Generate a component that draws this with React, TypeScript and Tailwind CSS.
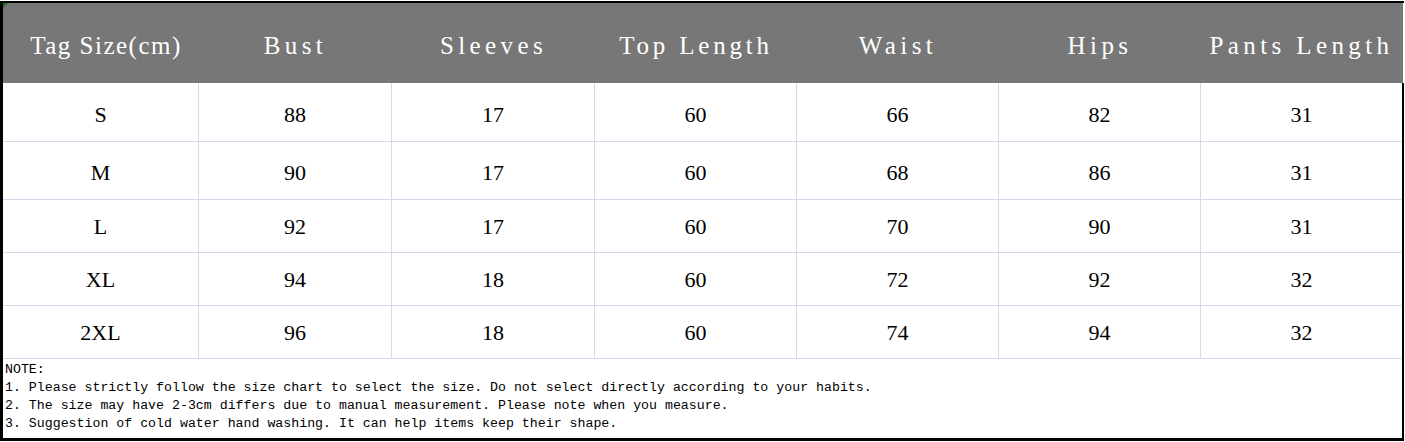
import React from "react";

const headers = ["Tag Size(cm)", "Bust", "Sleeves", "Top Length", "Waist", "Hips", "Pants Length"];
const tracks = [
  "tracking-[1.5px] pl-[10px]",
  "tracking-[4.4px]",
  "tracking-[4.4px]",
  "tracking-[3.8px]",
  "tracking-[4.4px]",
  "tracking-[4.4px]",
  "tracking-[4.4px]",
];
const rows: { cells: string[]; h: string; pad: string }[] = [
  { cells: ["S", "88", "17", "60", "66", "82", "31"], h: "h-[58px]", pad: "pt-[4px]" },
  { cells: ["M", "90", "17", "60", "68", "86", "31"], h: "h-[58px]", pad: "pt-[3px]" },
  { cells: ["L", "92", "17", "60", "70", "90", "31"], h: "h-[53px]", pad: "" },
  { cells: ["XL", "94", "18", "60", "72", "92", "32"], h: "h-[53px]", pad: "" },
  { cells: ["2XL", "96", "18", "60", "74", "94", "32"], h: "h-[53px]", pad: "" },
];

const cols = "grid grid-cols-[196px_193px_203px_202px_202px_202px_201px]";

export default function App() {
  return (
    <div className="w-[1405px] h-[442px] bg-white pt-px">
      <div className="w-[1404px] border-l-[3px] border-t-2 border-b-[3px] border-black">
        {/* header */}
        <div className={`${cols} relative h-[80px] w-[1400px] bg-[#777777]`}>
          <svg className="absolute left-0 top-0" width="5" height="5" viewBox="0 0 5 5">
            <polygon points="0,0 5,0 0,5" fill="#1f7a1f" />
          </svg>
          {headers.map((h, i) => (
            <div
              key={h}
              className={`flex items-center justify-center pt-[5px] text-[25px] text-white font-['Liberation_Serif',serif] ${tracks[i]}`}
            >
              {h}
            </div>
          ))}
        </div>
        {/* body */}
        <div className="w-[1401px] border-r-2 border-black">
          {rows.map((r, ri) => (
            <div key={ri} className={`${cols} ${r.h} border-t border-[#d5d9ec] first:border-t-0`}>
              {r.cells.map((c, ci) => (
                <div
                  key={ci}
                  className={`flex items-center justify-center text-[22px] text-black font-['Liberation_Serif',serif] ${
                    ci < 6 ? "border-r border-[#d5d9ec]" : ""
                  } ${r.pad}`}
                >
                  {c}
                </div>
              ))}
            </div>
          ))}
          <div className="h-[80px] border-t border-[#d5d9ec] pl-[2px] pt-[2px] text-[13.25px] leading-[18px] text-black font-['Liberation_Mono',monospace]">
            <div>NOTE:</div>
            <div>1. Please strictly follow the size chart to select the size. Do not select directly according to your habits.</div>
            <div>2. The size may have 2-3cm differs due to manual measurement. Please note when you measure.</div>
            <div>3. Suggestion of cold water hand washing. It can help items keep their shape.</div>
          </div>
        </div>
      </div>
    </div>
  );
}
